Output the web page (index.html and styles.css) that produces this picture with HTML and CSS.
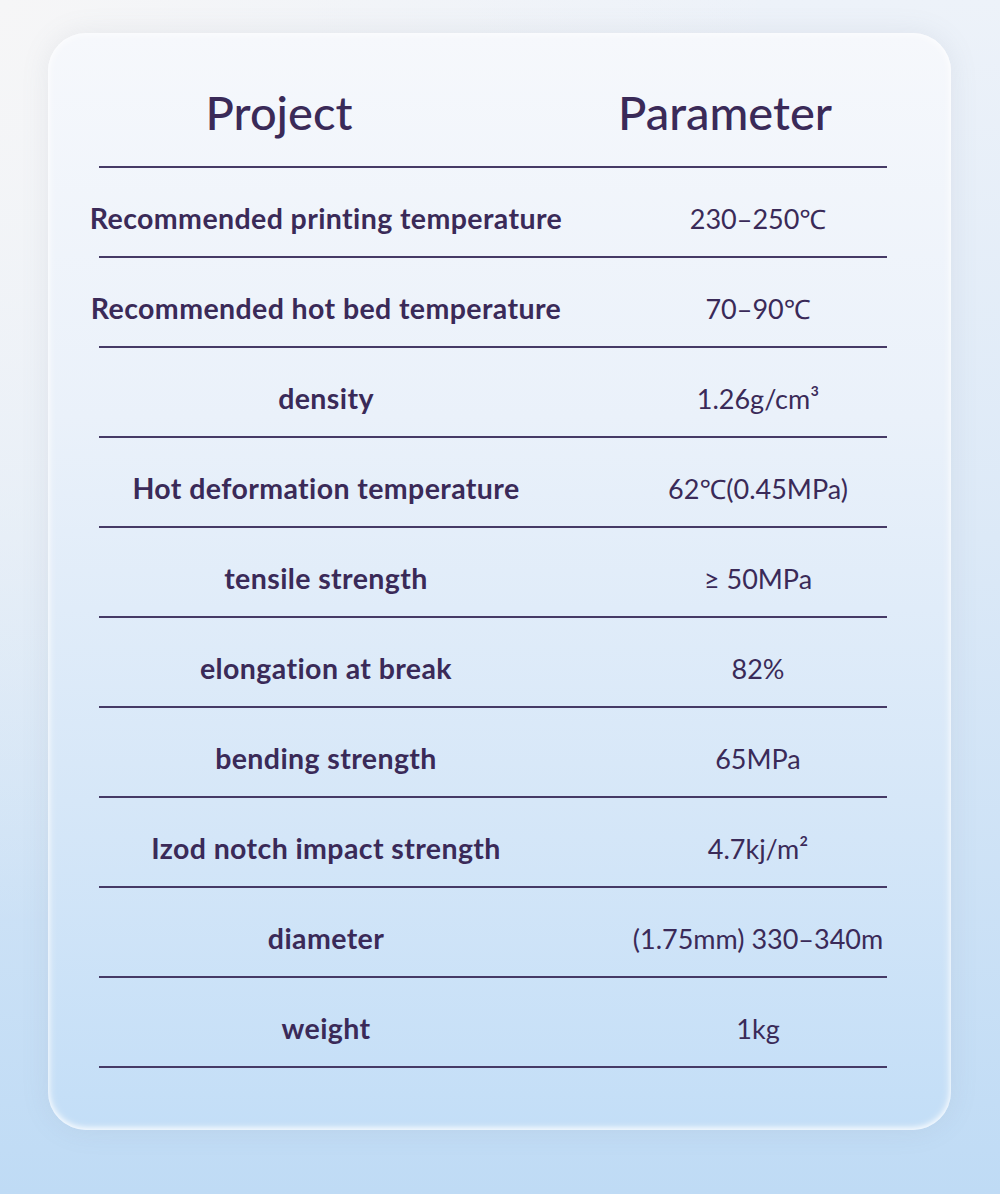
FILE: index.html
```html
<!DOCTYPE html>
<html lang="en">
<head>
<meta charset="utf-8">
<title>Parameters</title>
<link rel="stylesheet" href="styles.css">
</head>
<body>
<div class="page">
  <div class="card">
    <div class="head">
      <div class="hcell hleft">Project</div>
      <div class="hcell hright">Parameter</div>
    </div>
    <div class="row"><div class="k">Recommended printing temperature</div><div class="v">230–250℃</div></div>
    <div class="row"><div class="k">Recommended hot bed temperature</div><div class="v">70–90℃</div></div>
    <div class="row"><div class="k">density</div><div class="v">1.26g/cm³</div></div>
    <div class="row"><div class="k">Hot deformation temperature</div><div class="v">62℃(0.45MPa)</div></div>
    <div class="row"><div class="k">tensile strength</div><div class="v">≥ 50MPa</div></div>
    <div class="row"><div class="k">elongation at break</div><div class="v">82%</div></div>
    <div class="row"><div class="k">bending strength</div><div class="v">65MPa</div></div>
    <div class="row"><div class="k">Izod notch impact strength</div><div class="v">4.7kj/m²</div></div>
    <div class="row"><div class="k">diameter</div><div class="v">(1.75mm) 330–340m</div></div>
    <div class="row"><div class="k">weight</div><div class="v">1kg</div></div>
  </div>
</div>
</body>
</html>
```
FILE: styles.css
```css
html, body {
  margin: 0;
  padding: 0;
}
body {
  width: 1000px;
  height: 1194px;
  overflow: hidden;
  font-family: "Lato", "Noto Sans", "DejaVu Sans", sans-serif;
  color: #3a2a58;
}
.page {
  width: 1000px;
  height: 1194px;
  box-sizing: border-box;
  padding: 33px 0 0 48px;
  background:
    radial-gradient(ellipse at 0% 0%, rgba(246,246,247,1) 0%, rgba(246,246,247,0) 55%),
    linear-gradient(180deg, #edf2f9 0%, #dce9f7 45%, #bfdbf5 100%);
}
.card {
  width: 903px;
  height: 1097px;
  box-sizing: border-box;
  border-radius: 38px;
  padding: 0 64px 0 51px;
  background: linear-gradient(180deg, #f6f8fc 0%, #eaf1fa 35%, #d6e7f8 70%, #c3def7 100%);
  box-shadow: 0 0 28px rgba(120,130,150,0.12), inset 0 0 10px rgba(255,255,255,0.9), inset 0 -2px 5px rgba(255,255,255,0.6);
}
.head {
  height: 135px;
  display: grid;
  grid-template-columns: 360px 1fr;
  border-bottom: 2px solid #463a66;
  box-sizing: border-box;
}
.hcell {
  display: flex;
  justify-content: center;
  align-items: center;
  padding-top: 24px;
  font-size: 47px;
  font-weight: 500;
  white-space: nowrap;
}
.hright {
  padding-left: 104px;
}
.row {
  height: 90px;
  display: grid;
  grid-template-columns: 454px 1fr;
  border-bottom: 2px solid #463a66;
  box-sizing: border-box;
}
.k, .v {
  display: flex;
  justify-content: center;
  align-items: center;
  padding-top: 12px;
  font-size: 27px;
  white-space: nowrap;
}
.k {
  font-weight: 700;
  font-size: 28.5px;
  letter-spacing: 0.4px;
}
.v {
  font-weight: 400;
  padding-left: 76px;
}
```
